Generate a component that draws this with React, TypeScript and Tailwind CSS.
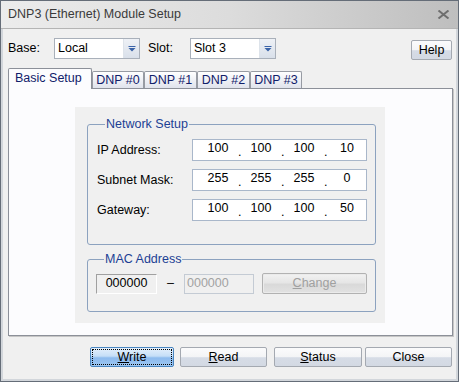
import { ReactNode } from 'react'

const font = "font-['Liberation_Sans',Arial,sans-serif]"

function DropArrow() {
  return (
    <svg width="8" height="6" viewBox="0 0 8 6">
      <rect x="0.5" y="0" width="7" height="1" fill="#3a63a8" />
      <path d="M0.5 2 H7.5 L4 5.5 Z" fill="#3a63a8" />
    </svg>
  )
}

function Combo({ value }: { value: string }) {
  return (
    <div className="flex w-[86px] h-[21px] border border-[#a9b0ba] bg-white">
      <span className="flex-1 pl-[3px] leading-[19px]">{value}</span>
      <div className="w-[16px] h-full flex items-center justify-center bg-linear-to-b from-[#eef1f6] to-[#d9e0ea] border-l border-[#dde3ea]">
        <DropArrow />
      </div>
    </div>
  )
}

function Button({ children, w, focus }: { children: ReactNode; w: string; focus?: boolean }) {
  if (focus) {
    return (
      <div className={`${w} h-[20px] rounded-[2px] border border-[#4a86c0] p-[1px] bg-[linear-gradient(to_bottom,#e4f0fc_0%,#c5def7_45%,#8dbbee_55%,#9cc6f2_100%)]`}>
        <div className="w-full h-full border border-dotted border-black flex items-center justify-center leading-[14px]">
          {children}
        </div>
      </div>
    )
  }
  return (
    <div className={`${w} h-[20px] rounded-[2px] border border-[#a4a9b1] flex items-center justify-center leading-[14px] bg-[linear-gradient(to_bottom,#fbfbfc_0%,#f3f4f6_52%,#d6dce6_53%,#d3d9e3_100%)]`}>
      {children}
    </div>
  )
}

function Tab({ label, active, w }: { label: string; active?: boolean; w: string }) {
  if (active) {
    return (
      <div className={`${w} h-[21px] -mb-px relative z-10 bg-[#fcfcfe] border border-b-0 border-[#8c9099] rounded-t-[2px] pl-[6px] pt-[1px] leading-[16px] text-[#10206a]`}>
        {label}
      </div>
    )
  }
  return (
    <div className={`${w} h-[17px] border border-b-0 border-[#979ba3] rounded-t-[2px] text-center leading-[16px] text-[#10206a] bg-linear-to-b from-[#ffffff] to-[#e0e3ec]`}>
      {label}
    </div>
  )
}

function IpBox({ parts }: { parts: string[] }) {
  return (
    <div className="w-[175px] h-[22px] border border-[#a9b7ca] bg-white flex pl-[5px] leading-[16px]">
      {parts.map((p, i) => (
        <div key={i} className="flex">
          {i > 0 && <span className="w-[3px] pt-[4px] text-center">.</span>}
          <span className="w-[40px] text-center">{p}</span>
        </div>
      ))}
    </div>
  )
}

function Group({ title, children, className }: { title: string; children: ReactNode; className: string }) {
  return (
    <fieldset className={`border border-[#8ca2bf] rounded-[3px] ${className}`}>
      <legend className="ml-[8px] px-[1px] leading-[14px] text-[#1c3f94]">{title}</legend>
      {children}
    </fieldset>
  )
}

export default function App() {
  const rows = [
    { label: 'IP Address:', parts: ['100', '100', '100', '10'] },
    { label: 'Subnet Mask:', parts: ['255', '255', '255', '0'] },
    { label: 'Gateway:', parts: ['100', '100', '100', '50'] },
  ]

  return (
    <div className={`w-[459px] h-[382px] flex flex-col bg-[#f0f0f0] border border-[#656d78] text-[12.5px] text-black ${font}`}>
      <div className="h-[28px] shrink-0 flex items-center justify-between pl-[7px] pr-[8px] bg-linear-to-r from-[#ececec] via-[#dcdcdc] to-[#bebebe] border-b border-[#b4b4b4]">
        <span className="text-[#3a3a3a]">DNP3 (Ethernet) Module Setup</span>
        <svg width="13" height="9" viewBox="0 0 13 9">
          <path d="M1.5 0.5 L11.5 8.5 M11.5 0.5 L1.5 8.5" stroke="#6e6e6e" strokeWidth="2" />
        </svg>
      </div>

      <div className="flex-1 flex flex-col border-x-2 border-b-2 border-[#d2d6db] pl-[5px] pr-[4px]">
        <div className="flex items-start mt-[9px] h-[22px]">
          <span className="w-[46px] leading-[20px]">Base:</span>
          <Combo value="Local" />
          <span className="ml-[8px] w-[42px] leading-[20px]">Slot:</span>
          <Combo value="Slot 3" />
          <div className="ml-auto mt-[2px]">
            <Button w="w-[41px]">Help</Button>
          </div>
        </div>

        <div className="flex items-end mt-[7px] h-[21px]">
          <Tab label="Basic Setup" active w="w-[84px]" />
          <Tab label="DNP #0" w="w-[52px]" />
          <Tab label="DNP #1" w="w-[53px]" />
          <Tab label="DNP #2" w="w-[53px]" />
          <Tab label="DNP #3" w="w-[52px]" />
        </div>

        <div className="h-[248px] w-[445px] border border-[#8c9099] bg-[#fcfcfe] shadow-[1px_1px_0_#c6c6c6] pl-[66px] pt-[18px]">
          <div className="w-[310px] h-[216px] bg-[#f0f0f0] pt-[10px] pl-[12px]">
            <Group title="Network Setup" className="w-[289px] h-[128px] pl-[9px] pr-[8px] pt-[8px]">
              <div className="flex flex-col gap-[8px]">
                {rows.map((r) => (
                  <div key={r.label} className="flex items-center">
                    <span className="w-[95px] leading-[20px]">{r.label}</span>
                    <IpBox parts={r.parts} />
                  </div>
                ))}
              </div>
            </Group>

            <Group title="MAC Address" className="w-[289px] h-[60px] mt-[7px] pl-[8px] pt-[7px]">
              <div className="flex items-center">
                <div className="w-[61px] h-[20px] border border-[#a0a0a0] border-r-white border-b-white text-center leading-[17px]">000000</div>
                <span className="w-[27px] text-center">–</span>
                <div className="w-[70px] h-[20px] border border-[#c4cbd4] pl-[2px] leading-[16px] text-[#a2a2a2]">000000</div>
                <div className="ml-[8px] w-[105px] h-[21px] rounded-[2px] border border-[#b2b2b2] flex items-center justify-center text-[#a0a0a0] bg-[linear-gradient(to_bottom,#f2f2f2_0%,#e6e6e6_45%,#d9d9d9_55%,#e2e2e2_100%)] shadow-[inset_0_0_0_1px_#ebebeb]">
                  <span><span className="underline">C</span>hange</span>
                </div>
              </div>
            </Group>
          </div>
        </div>

        <div className="flex mt-[11px] pl-[82px]">
          <Button w="w-[87px]" focus>
            <span><span className="underline">W</span>rite</span>
          </Button>
          <div className="ml-[6px]">
            <Button w="w-[87px]"><span><span className="underline">R</span>ead</span></Button>
          </div>
          <div className="ml-[7px]">
            <Button w="w-[88px]"><span><span className="underline">S</span>tatus</span></Button>
          </div>
          <div className="ml-[3px]">
            <Button w="w-[87px]">Close</Button>
          </div>
        </div>
      </div>
    </div>
  )
}
